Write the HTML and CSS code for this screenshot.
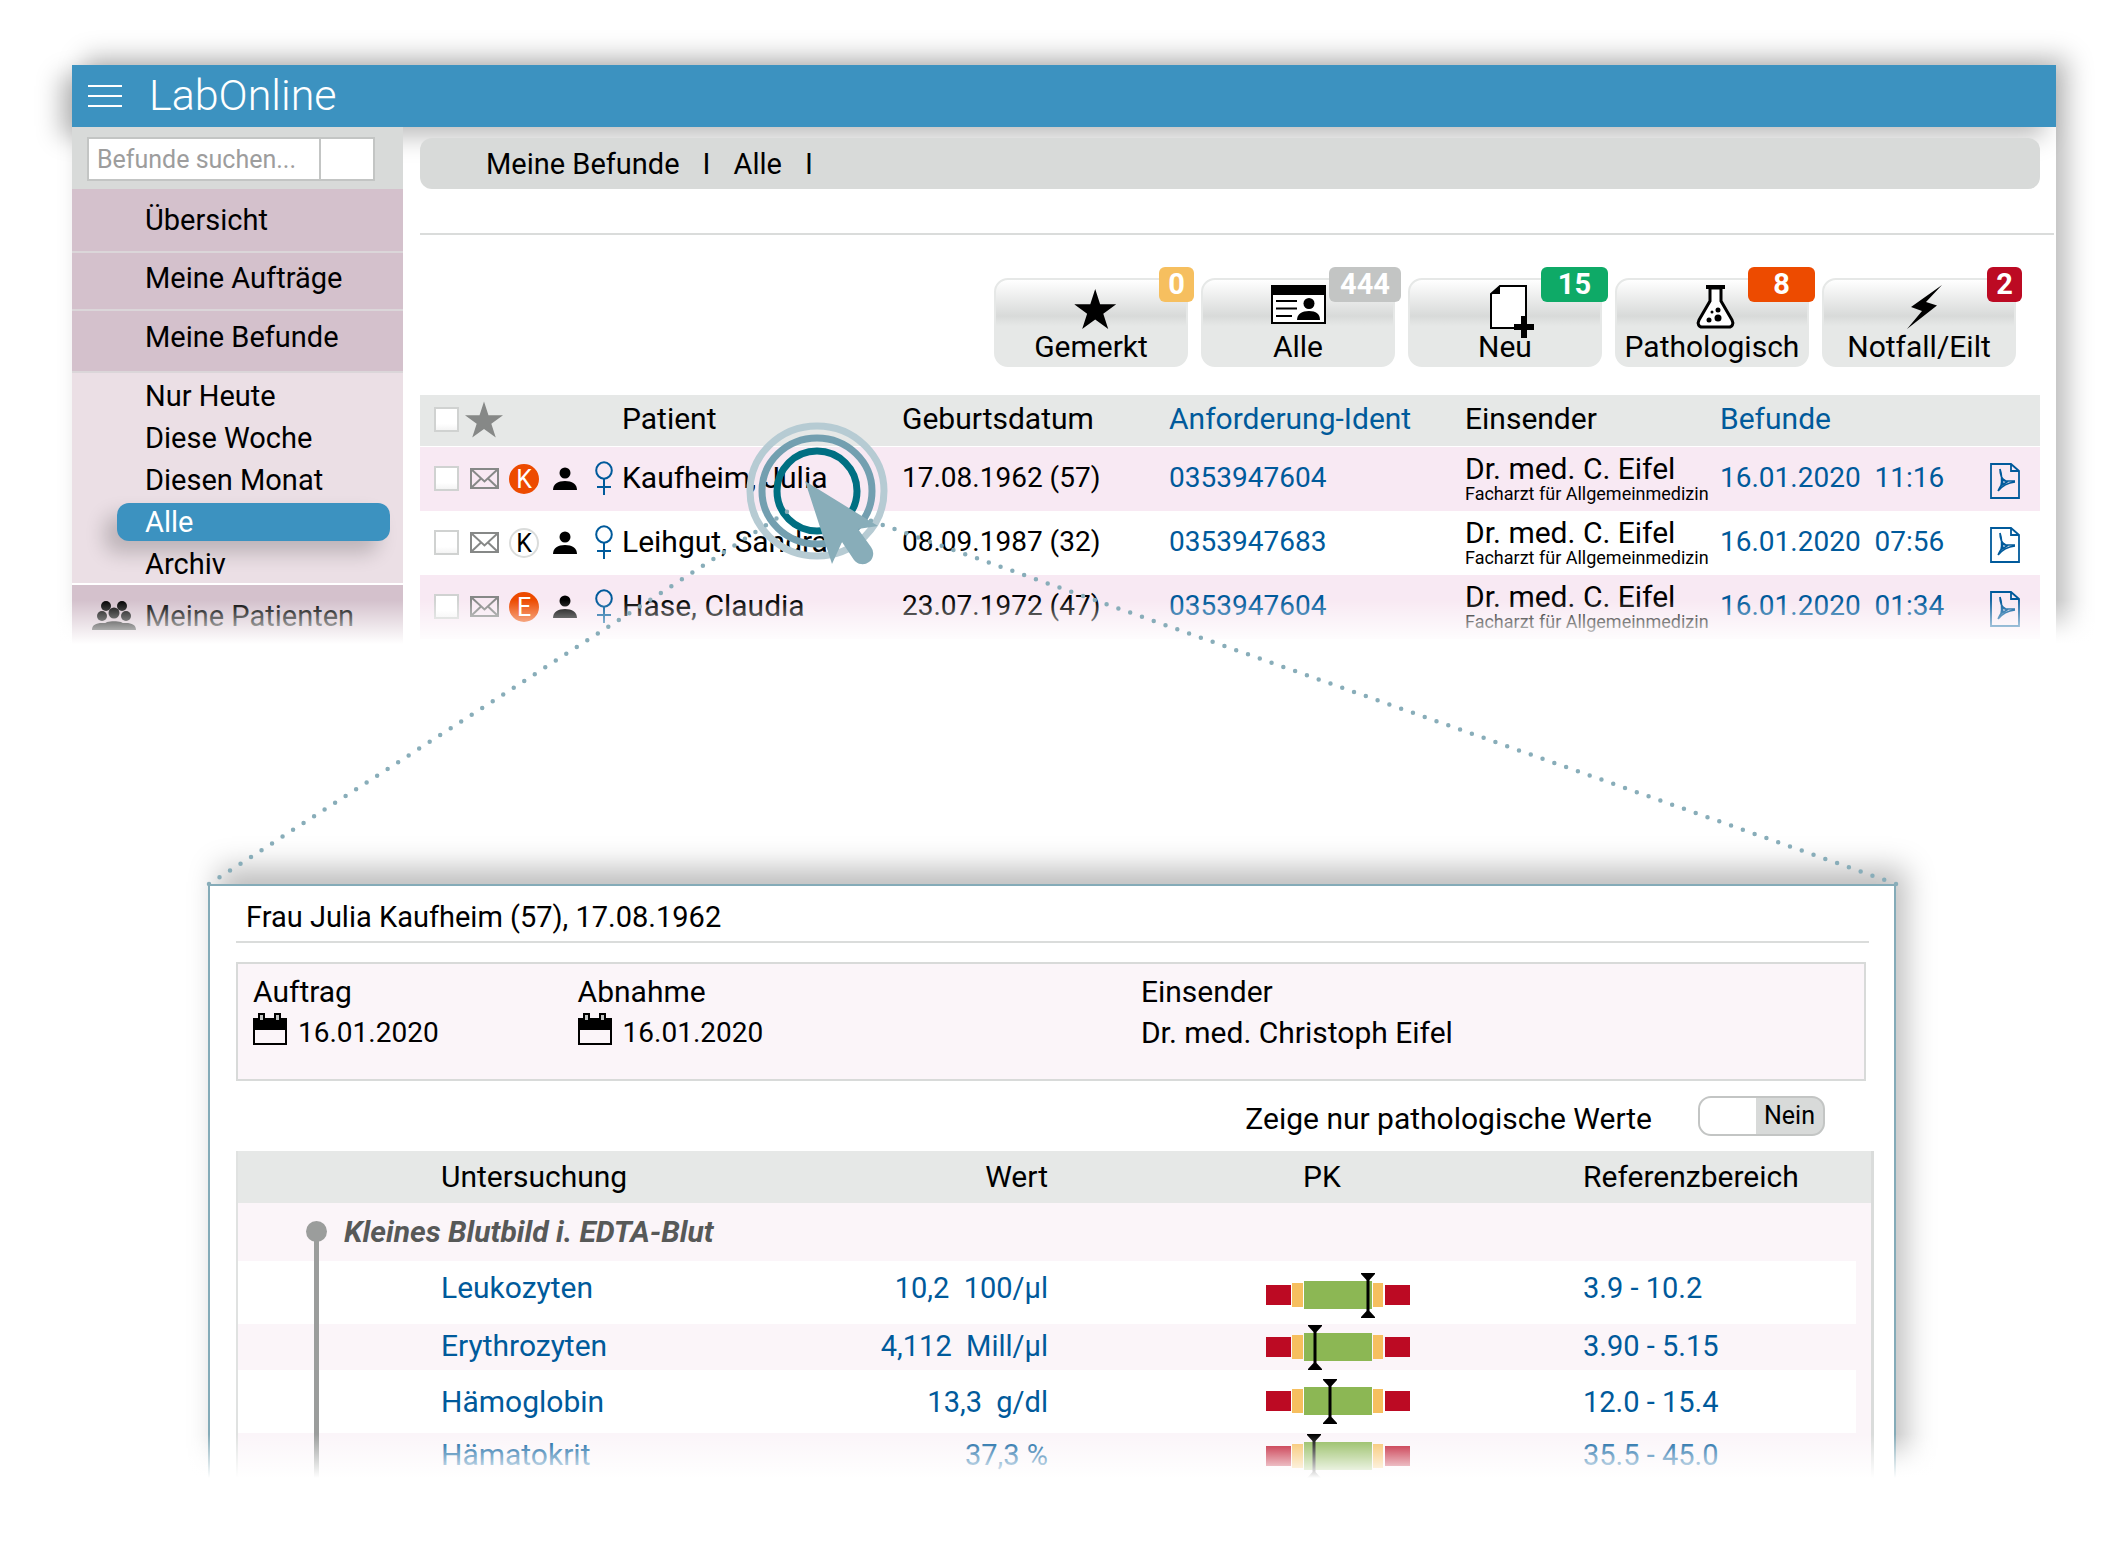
FILE: index.html
```html
<!DOCTYPE html>
<html lang="de">
<head>
<meta charset="utf-8">
<title>LabOnline</title>
<link rel="stylesheet" href="styles.css">
</head>
<body>
<svg class="sprite" aria-hidden="true">
  <symbol id="star" viewBox="0 0 40 38"><path d="M20 0l4.700 14.500H40L27.700 23.500 32.400 38 20 29 7.600 38l4.700-14.500L0 14.500h15.300z"/></symbol>
  <symbol id="mail" viewBox="0 0 29 21"><path d="M1 1h27v19H1zM1 1l13.500 12.500L28 1M1 20l10-9.500M28 20l-10-9.500" fill="none" stroke="#868887" stroke-width="2"/></symbol>
  <symbol id="person" viewBox="0 0 24 23"><circle cx="12" cy="6" r="5.500"/><path d="M0 23c0-6 5-9 12-9s12 3 12 9z"/></symbol>
  <symbol id="female" viewBox="0 0 18 34"><path d="M9 18v16M2 26h14" fill="none" stroke="#005a9b" stroke-width="2"/><ellipse cx="9" cy="9.500" rx="7.800" ry="8.200" fill="none" stroke="#005a9b" stroke-width="2"/></symbol>
  <symbol id="pdf" viewBox="0 0 30 36"><path d="M1 1h20l8 7v27H1zM21 1v7h8" fill="none" stroke="#005a9b" stroke-width="1.800"/><path d="M10 6c0 6 2 10 5 12l10 0M8 28c2-4 4-7 5-9M8 28c4-5 9-8 17-9M10 6c2 6 2 12 1 17M12 22l5-3-4-3z" fill="none" stroke="#005a9b" stroke-width="1.600"/></symbol>
  <symbol id="calendar" viewBox="0 0 34 32"><path d="M0 5h34v27H0z"/><path d="M2 17h30v13H2z" fill="#fbf5f9"/><path d="M6 1h5v7H6zM22 1h5v7h-5z" fill="#c3c5c4" stroke="#000" stroke-width="2"/></symbol>
  <symbol id="range" viewBox="0 0 144 45">
    <path d="M0 12h25v20H0zM119 12h25v20h-25z" fill="#bc0a23"/>
    <path d="M26 10h11v24H26zM107 10h10v24h-10z" fill="#f6bf5f"/>
    <path d="M38 8h68v28H38z" fill="#8cb754"/>
  </symbol>
  <symbol id="marker" viewBox="0 0 14 45"><path d="M0 0h14v1L8.500 7v31l5.500 6v1H0v-1l5.500-6V7L0 1z"/></symbol>
</svg>

<section class="window">
  <header class="topbar">
    <button class="menu" aria-label="Menü"><span></span><span></span><span></span></button>
    <h1>LabOnline</h1>
  </header>
  <div class="columns">
    <aside class="sidebar">
      <form class="search">
        <input type="search" placeholder="Befunde suchen..." aria-label="Befunde suchen">
        <button type="button" aria-label="Suchen"></button>
      </form>
      <nav>
        <a class="nav-item nav-first" href="#">Übersicht</a>
        <a class="nav-item" href="#">Meine Aufträge</a>
        <a class="nav-item nav-open" href="#">Meine Befunde</a>
        <div class="subnav">
          <a href="#">Nur Heute</a>
          <a href="#">Diese Woche</a>
          <a href="#">Diesen Monat</a>
          <a href="#" class="active">Alle</a>
          <a href="#">Archiv</a>
        </div>
        <a class="nav-item nav-last" href="#">
          <svg width="44" height="29" viewBox="0 0 44 29"><circle cx="14" cy="5" r="5"/><circle cx="30" cy="5" r="5"/><circle cx="10" cy="15" r="5"/><circle cx="34" cy="15" r="5"/><circle cx="22" cy="12" r="5.500"/><path d="M0 29c0-5 4-7 10-7 3 0 4 0 5-1 4-1 10-1 14 0 1 1 2 1 5 1 6 0 10 2 10 7z"/></svg>
          Meine Patienten</a>
      </nav>
    </aside>
    <main class="main">
      <nav class="crumbs"><a href="#">Meine Befunde</a><span>I</span><a href="#">Alle</a><span>I</span></nav>
      <hr>
      <div class="filters">
        <button class="filter"><svg class="icon-start" width="42" height="40" viewBox="-4 0 40 38"><use href="#star" width="40" height="38"/></svg>Gemerkt<b class="badge yellow">0</b></button>
        <button class="filter"><svg width="55" height="39" viewBox="0 0 55 39"><path d="M1 1h53v37H1z" fill="#fff" stroke="#000" stroke-width="2"/><path d="M0 0h55v10H0z"/><path d="M5 16h21M5 23.500h21M5 31h16" stroke="#000" stroke-width="2"/><circle cx="38" cy="18.500" r="5.500"/><path d="M26 35c0-6 5-9 12-9s11 3 11 9z"/></svg>Alle<b class="badge grey">444</b></button>
        <button class="filter"><svg width="46" height="43" viewBox="-8 0 46 43"><path d="M10 1h26v42H1V9z" fill="#fff" stroke="#000" stroke-width="2"/><path d="M1 9l9-8v8z"/><path d="M24 42h20M34 31v22" stroke="#000" stroke-width="6"/></svg>Neu<b class="badge green wide">15</b></button>
        <button class="filter"><svg width="37" height="44" viewBox="-3 0 37 44"><path d="M13 3v13L2 35c-2 4 0 7 3 7h27c3 0 5-3 3-7L24 16V3z" fill="#fff" stroke="#000" stroke-width="3"/><path d="M9 0h19v4H9z"/><circle cx="21" cy="25" r="2.500"/><circle cx="15" cy="27" r="1.500"/><circle cx="21" cy="33" r="3.500"/><circle cx="12" cy="35" r="2.500"/></svg>Pathologisch<b class="badge orange wide">8</b></button>
        <button class="filter"><svg width="35" height="44" viewBox="-5 0 35 44"><path d="M35 0L19 17l11 3.500L0 44l15-18L4 22z"/></svg>Notfall/Eilt<b class="badge red">2</b></button>
      </div>
      <table class="reports">
        <colgroup><col class="c-check"><col class="c-mail"><col class="c-flag"><col class="c-person"><col class="c-sex"><col class="c-name"><col class="c-birth"><col class="c-ident"><col class="c-sender"><col class="c-date"><col class="c-pdf"></colgroup>
        <thead>
          <tr>
            <th class="check"><input type="checkbox" aria-label="Alle auswählen"></th>
            <th colspan="4"><svg class="head-star" width="38" height="37"><use href="#star"/></svg></th>
            <th>Patient</th><th>Geburtsdatum</th><th class="blue">Anforderung-Ident</th><th>Einsender</th><th class="blue">Befunde</th><th></th>
          </tr>
        </thead>
        <tbody>
          <tr>
            <td class="check"><input type="checkbox" aria-label="Kaufheim, Julia"></td>
            <td class="mail"><svg width="29" height="21"><use href="#mail"/></svg></td>
            <td><span class="flag hot">K</span></td>
            <td><svg width="24" height="23"><use href="#person"/></svg></td>
            <td><svg width="18" height="34"><use href="#female"/></svg></td>
            <td class="name">Kaufheim, Julia</td><td class="digits">17.08.1962 (57)</td><td class="blue digits">0353947604</td>
            <td class="sender">Dr. med. C. Eifel<small>Facharzt für Allgemeinmedizin</small></td>
            <td class="blue digits">16.01.2020&nbsp; 11:16</td>
            <td class="pdf"><a href="#" aria-label="PDF"><svg width="30" height="36"><use href="#pdf"/></svg></a></td>
          </tr>
          <tr>
            <td class="check"><input type="checkbox" aria-label="Leihgut, Sandra"></td>
            <td class="mail"><svg width="29" height="21"><use href="#mail"/></svg></td>
            <td><span class="flag">K</span></td>
            <td><svg width="24" height="23"><use href="#person"/></svg></td>
            <td><svg width="18" height="34"><use href="#female"/></svg></td>
            <td class="name">Leihgut, Sandra</td><td class="digits">08.09.1987 (32)</td><td class="blue digits">0353947683</td>
            <td class="sender">Dr. med. C. Eifel<small>Facharzt für Allgemeinmedizin</small></td>
            <td class="blue digits">16.01.2020&nbsp; 07:56</td>
            <td class="pdf"><a href="#" aria-label="PDF"><svg width="30" height="36"><use href="#pdf"/></svg></a></td>
          </tr>
          <tr>
            <td class="check"><input type="checkbox" aria-label="Hase, Claudia"></td>
            <td class="mail"><svg width="29" height="21"><use href="#mail"/></svg></td>
            <td><span class="flag hot">E</span></td>
            <td><svg width="24" height="23"><use href="#person"/></svg></td>
            <td><svg width="18" height="34"><use href="#female"/></svg></td>
            <td class="name">Hase, Claudia</td><td class="digits">23.07.1972 (47)</td><td class="blue digits">0353947604</td>
            <td class="sender">Dr. med. C. Eifel<small>Facharzt für Allgemeinmedizin</small></td>
            <td class="blue digits">16.01.2020&nbsp; 01:34</td>
            <td class="pdf"><a href="#" aria-label="PDF"><svg width="30" height="36"><use href="#pdf"/></svg></a></td>
          </tr>
        </tbody>
      </table>
    </main>
  </div>
</section>

<section class="detail">
  <h2>Frau Julia Kaufheim (57), 17.08.1962</h2>
  <dl class="info">
    <div><dt>Auftrag</dt><dd class="digits"><svg width="34" height="32"><use href="#calendar"/></svg>16.01.2020</dd></div>
    <div><dt>Abnahme</dt><dd class="digits"><svg width="34" height="32"><use href="#calendar"/></svg>16.01.2020</dd></div>
    <div><dt>Einsender</dt><dd>Dr. med. Christoph Eifel</dd></div>
  </dl>
  <div class="option">
    <label for="patho">Zeige nur pathologische Werte</label>
    <span class="switch"><input type="checkbox" id="patho"><span>Nein</span></span>
  </div>
  <table class="values">
    <colgroup><col class="v-tree"><col class="v-name"><col class="v-value"><col class="v-gap"><col class="v-range"><col class="v-ref"><col class="v-end"></colgroup>
    <thead><tr><th></th><th>Untersuchung</th><th class="num">Wert</th><th></th><th class="pk">PK</th><th>Referenzbereich</th><th></th></tr></thead>
    <tbody class="blue">
      <tr class="group"><td colspan="7">Kleines Blutbild i. EDTA-Blut</td></tr>
      <tr class="tall high"><td></td><td class="name">Leukozyten</td><td class="num">10,2&nbsp; 100/µl</td><td></td><td><svg width="144" height="45"><use href="#range"/><use href="#marker" x="95" width="14" height="45"/></svg></td><td>3.9 - 10.2</td><td class="edge"></td></tr>
      <tr class="short"><td></td><td class="name">Erythrozyten</td><td class="num">4,112&nbsp; Mill/µl</td><td></td><td><svg width="144" height="45"><use href="#range"/><use href="#marker" x="42" width="14" height="45"/></svg></td><td>3.90 - 5.15</td><td class="edge"></td></tr>
      <tr class="tall"><td></td><td class="name">Hämoglobin</td><td class="num">13,3&nbsp; g/dl</td><td></td><td><svg width="144" height="45"><use href="#range"/><use href="#marker" x="57" width="14" height="45"/></svg></td><td>12.0 - 15.4</td><td class="edge"></td></tr>
      <tr class="short"><td></td><td class="name">Hämatokrit</td><td class="num">37,3 %</td><td></td><td><svg width="144" height="45"><use href="#range"/><use href="#marker" x="41" width="14" height="45"/></svg></td><td>35.5 - 45.0</td><td class="edge"></td></tr>
    </tbody>
  </table>
</section>

<svg class="click" width="144" height="144" viewBox="0 0 144 144" fill="none" aria-hidden="true">
  <ellipse cx="72" cy="72" rx="67" ry="65" stroke="#b6cbd3" stroke-width="7"/>
  <ellipse cx="72" cy="72" rx="55" ry="53" stroke="#739fb0" stroke-width="7"/>
  <circle cx="72" cy="72" r="40" stroke="#006f82" stroke-width="7"/>
</svg>
<svg class="rays" viewBox="0 0 2109 900" preserveAspectRatio="none" fill="none" aria-hidden="true">
  <path d="M209 884L788 511M1896 884L866 519" stroke="#88adb9" stroke-width="4.500" stroke-linecap="round" stroke-dasharray="0 12.500"/>
</svg>
<svg class="click" width="144" height="144" viewBox="0 0 144 144" aria-hidden="true">
  <path d="M60 62l73 45-20 3 13 18a10.500 10.500 0 0 1-17 13L97 123l-10 22z" fill="#88adb9"/>
</svg>
</body>
</html>
```
FILE: styles.css
```css
* { box-sizing: border-box; }

body {
  position: relative;
  margin: 0;
  padding: 65px 53px 40px 72px;
  background: #fff;
  color: #000;
  font: 29px/34px Roboto, "Liberation Sans", sans-serif;
}

a { color: inherit; text-decoration: none; }
svg { display: block; overflow: visible; }
button, input { font: inherit; color: inherit; margin: 0; }
.sprite { position: absolute; width: 0; height: 0; }
.blue { color: #005a9b; }
.digits { font-size: 28px; }
.name { font-size: 30px; }

/* application window */
.window {
  position: relative;
  height: 579px;
  background: #fff;
  box-shadow: 12px -8px 24px rgba(0, 0, 0, .26);
}
.window::after {
  content: "";
  position: absolute;
  inset: auto -60px 0 -60px;
  height: 44px;
  background: linear-gradient(rgba(255, 255, 255, 0), #fff);
  box-shadow: 0 30px 0 #fff;
}
.topbar {
  display: flex;
  align-items: center;
  gap: 27px;
  height: 62px;
  padding-left: 16px;
  background: #3c92c0;
  color: #fff;
  box-shadow: -12px 10px 24px rgba(0, 0, 0, .26);
}
.topbar h1 { margin: 0; font-size: 43px; line-height: 58px; padding-bottom: 2px; font-weight: 300; }
.menu { display: flex; flex-direction: column; gap: 8px; width: 34px; padding: 0; border: 0; background: none; }
.menu span { height: 2px; background: #fff; }
.columns { display: flex; height: 517px; }

/* sidebar */
.sidebar { flex: 0 0 331px; min-width: 0; background: #ebdfe5; }
.search { display: flex; height: 62px; padding: 10px 28px 8px 15px; background: #d8dad9; }
.search input, .search button { border: 2px solid #c3c5c4; border-radius: 0; background: #fff; }
.search input { flex: 1; min-width: 0; padding: 2px 0 0 8px; font-size: 25px; appearance: none; outline: 0; }
.search input::placeholder { color: #9d9d9d; opacity: 1; }
.search button { width: 54px; border-left: 0; }
.nav-item {
  display: flex;
  align-items: center;
  height: 58px;
  padding: 0 0 6px 73px;
  background: #d4c1cc;
  border-bottom: 2px solid #dbd6d9;
}
.nav-first { height: 64px; padding-bottom: 0; }
.nav-open { height: 62px; padding-bottom: 8px; }
.nav-last { height: 61px; padding: 0 0 0 20px; gap: 9px; border: 0; white-space: nowrap; }
.subnav { display: flex; flex-direction: column; gap: 4px; padding: 4px 13px 0 45px; border-bottom: 2px solid #fff; }
.subnav a { height: 38px; line-height: 38px; padding-left: 28px; border-radius: 12px; }
.subnav .active { background: #3c92c0; color: #fff; box-shadow: -12px 12px 20px rgba(0, 0, 0, .2); }
.subnav a:last-child { position: relative; }

/* main column */
.main { flex: 1; min-width: 0; padding: 11px 16px 0 17px; }
.crumbs { display: flex; align-items: center; gap: 23px; height: 51px; padding-left: 66px; border-radius: 12px; background: #d8dad9; }
.main hr { height: 2px; margin: 44px -14px 43px 0; border: 0; background: #dadcdb; }
.filters { display: flex; justify-content: flex-end; gap: 13px; margin: 0 24px 28px 0; }
.filter {
  position: relative;
  display: flex;
  flex-direction: column;
  align-items: center;
  justify-content: space-between;
  width: 194px;
  height: 89px;
  padding: 5px 0 1px;
  border: 2px solid #e6e8e7;
  border-radius: 14px;
  background: linear-gradient(#fff, #d8dad9 36px, #e6e8e7 46px);
  font-size: 30px;
  white-space: nowrap;
}
.filter .icon-start { margin-top: 4px; }
.badge {
  position: absolute;
  top: -13px;
  right: -8px;
  height: 35px;
  padding: 0 9px;
  border-radius: 6px;
  color: #fff;
  font-size: 29px;
  font-weight: 700;
}
.badge.wide { width: 67px; }
.yellow { background: #f6bf5f; }
.badge.grey { padding: 0 11px; background: #c3c5c4; }
.green { background: #0eaa67; }
.orange { background: #ed4b00; }
.red { background: #bc0a23; }

table { width: 100%; border-spacing: 0; table-layout: fixed; }
th, td { padding: 0; font-weight: 400; text-align: left; white-space: nowrap; }
th { font-size: 30px; }
.reports th { height: 52px; padding-bottom: 3px; background: #e6e8e7; border-bottom: 1px solid #fff; }
.reports td { height: 64px; padding-bottom: 2px; }
.reports tbody tr:nth-child(odd) { background: #f8e9f3; }
.c-check { width: 45px; }
.c-mail, .c-flag { width: 44px; }
.c-person { width: 42px; }
.c-sex { width: 27px; }
.c-name { width: 280px; }
.c-birth { width: 267px; }
.c-ident { width: 296px; }
.c-sender { width: 255px; }
.c-date { width: 270px; }
.c-pdf { width: 50px; }
.check { padding-left: 14px; }
.check input {
  display: block;
  width: 25px;
  height: 25px;
  appearance: none;
  border: 2px solid #d0d2d1;
  background: linear-gradient(#fff 70%, #f4f4f4);
}
.head-star { fill: #868887; }
.reports .mail { padding-left: 5px; }
.flag {
  display: block;
  width: 30px;
  height: 30px;
  margin-top: 2px;
  border: 2px solid #dadcdb;
  border-radius: 50%;
  background: #fff;
  font-size: 25px;
  line-height: 27px;
  text-align: center;
}
.flag.hot { border-color: #ed4b00; background: #ed4b00; color: #fff; }
.sender { font-size: 30px; line-height: 32px; }
.sender small { display: block; font-size: 18px; line-height: 18px; }
.reports .pdf { padding: 4px 0 0; }
.pdf a { display: block; }

/* report detail */
.detail {
  position: relative;
  height: 594px;
  margin: 240px 160px 0 136px;
  padding: 0 21px 0 26px;
  border: 2px solid #84abb8;
  border-bottom: 0;
  background: #fff;
  box-shadow: 10px -16px 28px rgba(0, 0, 0, .26);
}
.detail::after {
  content: "";
  position: absolute;
  inset: auto -60px 0 -60px;
  height: 44px;
  background: linear-gradient(rgba(255, 255, 255, 0), #fff);
  box-shadow: 0 40px 0 #fff;
}
.detail h2 { margin: 0 4px 19px 0; padding: 14px 0 7px 10px; border-bottom: 2px solid #dadcdb; font-size: 29px; font-weight: 400; }
.info {
  display: grid;
  grid-template-columns: 325fr 564fr 724fr;
  height: 119px;
  margin: 0 7px 0 0;
  padding: 9px 0 0 15px;
  border: 2px solid #d8dad9;
  background: #fbf5f9;
  font-size: 30px;
}
.info dt { height: 40px; line-height: 38px; }
.info dd { display: flex; gap: 11px; margin: 0; line-height: 40px; }
.option { display: flex; align-items: center; justify-content: flex-end; gap: 46px; padding: 15px 48px 15px 0; font-size: 30px; }
.option label { padding-top: 6px; }
.switch {
  display: flex;
  width: 127px;
  height: 40px;
  border: 2px solid #c3c5c4;
  border-radius: 13px;
  overflow: hidden;
  background: #d8dad9;
  font-size: 25px;
  line-height: 36px;
}
.switch input { width: 56px; height: 36px; appearance: none; background: #fff; }
.switch span { flex: 1; text-align: center; }
.values { border-left: 2px solid #e0e2e1; border-right: 3px solid #dadcdb; background: #fbf5f9; }
.v-tree { width: 203px; }
.v-name { width: 319px; }
.v-value { width: 288px; }
.v-gap { width: 218px; }
.v-range { width: 317px; }
.v-ref { width: 273px; }
.v-end { width: 15px; }
.values th { height: 52px; background: #e6e8e7; }
.values .num { text-align: right; }
.values .pk { padding-left: 37px; }
.group td {
  position: relative;
  height: 58px;
  padding-left: 106px;
  color: #575958;
  font-size: 30px;
  font-weight: 700;
  font-style: italic;
}
.group td::before {
  content: "";
  position: absolute;
  left: 68px;
  top: 18px;
  width: 21px;
  height: 21px;
  border-radius: 50%;
  background: #9b9d9c;
}
.group td::after {
  content: "";
  position: absolute;
  left: 76px;
  top: 30px;
  width: 5px;
  height: 246px;
  background: #9b9d9c;
}
.tall td { height: 63px; background: #fff; }
.short td { height: 46px; padding-bottom: 2px; }
.short svg { margin: 0 0 -2px; }
.tall .edge { background: none; }
.high td { padding-bottom: 10px; }
.high svg { margin: 6px 0 -10px; }

/* pointer that opens the detail view */
.click { position: absolute; top: 419px; left: calc(50% - 310px); }
.rays { position: absolute; top: 0; left: 0; width: 100%; height: 900px; pointer-events: none; }
```
